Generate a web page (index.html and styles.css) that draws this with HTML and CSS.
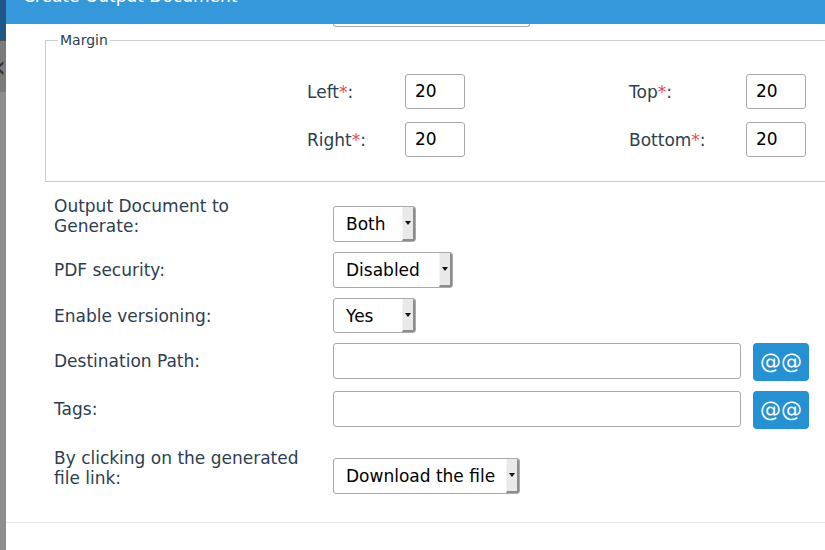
FILE: index.html
```html
<!DOCTYPE html>
<html>
<head>
<meta charset="utf-8">
<link rel="stylesheet" href="styles.css">
</head>
<body>
<div class="backdrop">
  <div class="bd-top"></div>
  <div class="bd-nav"><span class="chev">&lsaquo;</span></div>
  <div class="bd-rest"></div>
</div>
<div class="dialog">
  <div class="dlg-head"><div class="dlg-title">Create Output Document</div></div>
  <div class="dlg-body">
    <div class="prev-input"></div>
    <fieldset class="margin-set">
      <legend>Margin</legend>
      <div class="margin-grid">
        <label class="m-label">Left<span class="req">*</span>:</label>
        <div class="txt small">20</div>
        <span></span>
        <label class="m-label">Top<span class="req">*</span>:</label>
        <div class="txt small">20</div>
        <label class="m-label">Right<span class="req">*</span>:</label>
        <div class="txt small">20</div>
        <span></span>
        <label class="m-label">Bottom<span class="req">*</span>:</label>
        <div class="txt small">20</div>
      </div>
    </fieldset>

    <div class="form-row two">
      <label class="f-label">Output Document to Generate:</label>
      <div class="sel w83"><span class="sel-val">Both</span><span class="sel-arrow"></span></div>
    </div>
    <div class="form-row">
      <label class="f-label">PDF security:</label>
      <div class="sel w120"><span class="sel-val">Disabled</span><span class="sel-arrow"></span></div>
    </div>
    <div class="form-row">
      <label class="f-label">Enable versioning:</label>
      <div class="sel w83 h35"><span class="sel-val">Yes</span><span class="sel-arrow"></span></div>
    </div>
    <div class="form-row">
      <label class="f-label">Destination Path:</label>
      <div class="txt wide"></div>
      <button class="at-btn">@@</button>
    </div>
    <div class="form-row">
      <label class="f-label">Tags:</label>
      <div class="txt wide"></div>
      <button class="at-btn">@@</button>
    </div>
    <div class="form-row two last">
      <label class="f-label">By clicking on the generated file link:</label>
      <div class="sel w187"><span class="sel-val">Download the file</span><span class="sel-arrow"></span></div>
    </div>
    <div class="footer-line"></div>
  </div>
</div>
</body>
</html>
```

FILE: styles.css
```css
* { box-sizing: border-box; }
html, body { margin: 0; padding: 0; }
body {
  width: 825px;
  height: 550px;
  overflow: hidden;
  display: flex;
  font-family: "DejaVu Sans", sans-serif;
  font-size: 17px;
  background: #fff;
}
.backdrop {
  width: 6px;
  flex: none;
  display: flex;
  flex-direction: column;
}
.bd-top { height: 40px; background: #1d5687; }
.bd-nav {
  height: 52px;
  background: #7b7b7b;
  border-top: 1px solid #555;
  overflow: hidden;
  display: flex;
  align-items: center;
}
.chev { color: #333; font-size: 30px; line-height: 30px; margin-left: -6px; }
.bd-rest { flex: 1; background: #8d8d8d; }

.dialog {
  flex: 1;
  display: flex;
  flex-direction: column;
  background: #fff;
  overflow: hidden;
}
.dlg-head {
  height: 24px;
  flex: none;
  background: #3498db;
  overflow: hidden;
}
.dlg-title {
  color: #fff;
  font-size: 17px;
  line-height: 22px;
  margin-top: -15px;
  padding-left: 17px;
}
.dlg-body {
  flex: 1;
  overflow: hidden;
}
.prev-input {
  margin-left: 327px;
  width: 197px;
  height: 3px;
  border: 1px solid #aaa;
  border-top: 0;
  border-radius: 0 0 3px 3px;
}
.margin-set {
  margin: 4px 0 0 39px;
  width: 820px;
  border: 1px solid #cccccc;
  padding: 25px 0 24px 0;
  min-width: 0;
}
.margin-set legend {
  font-size: 14px;
  line-height: 18px;
  color: #2c3e50;
  padding: 0 2px;
  margin-left: 12px;
}
.margin-grid {
  margin-left: 261px;
  display: grid;
  grid-template-columns: 98px 60px 164px 117px 60px;
  row-gap: 13px;
  align-items: center;
}
.m-label, .f-label {
  color: #2c3e50;
  font-size: 17px;
  line-height: 20px;
}
.req { color: #ee4b4b; }

.txt {
  height: 36px;
  border: 1px solid #aaa;
  border-radius: 3px;
  background: #fff;
  color: #000;
  line-height: 34px;
  padding-left: 9px;
}
.txt.small { width: 60px; height: 35px; line-height: 33px; }
.txt.wide { width: 408px; flex: none; }

.form-row {
  display: flex;
  align-items: flex-start;
  margin: 10px 0 0 48px;
}
.margin-set + .form-row { margin-top: 12px; }
.form-row .f-label {
  width: 279px;
  flex: none;
  margin-top: 8px;
}
.form-row.two .f-label { margin-top: 2px; width: 255px; margin-right: 24px; }
.form-row.two .sel { margin-top: 12px; }
.form-row.last { margin-top: 17px; }

.sel {
  height: 36px;
  border: 1px solid #aaa;
  border-radius: 3px;
  background: #fff;
  display: flex;
  flex: none;
  overflow: hidden;
}
.sel.h35 { height: 35px; }
.w83 { width: 83px; }
.w120 { width: 120px; }
.w187 { width: 187px; }
.sel-val {
  flex: 1;
  padding-left: 12px;
  line-height: 34px;
  color: #000;
  white-space: nowrap;
}
.sel-arrow {
  width: 13px;
  flex: none;
  background: #e9e9e9;
  border-right: 2px solid #8c8c8c;
  border-bottom: 2px solid #8c8c8c;
  border-left: 1px solid #f4f4f4;
  display: flex;
  align-items: center;
  justify-content: center;
}
.sel-arrow::after {
  content: "";
  width: 0;
  height: 0;
  border-left: 3px solid transparent;
  border-right: 3px solid transparent;
  border-top: 4px solid #111;
}
.at-btn {
  margin-left: 12px;
  width: 56px;
  height: 38px;
  border: 0;
  border-radius: 4px;
  background: #2391d2;
  color: #fff;
  font-family: "DejaVu Sans", sans-serif;
  font-size: 21px;
  padding: 0;
  flex: none;
}
.footer-line {
  margin-top: 28px;
  height: 1px;
  background: #e5e5e5;
}
```
